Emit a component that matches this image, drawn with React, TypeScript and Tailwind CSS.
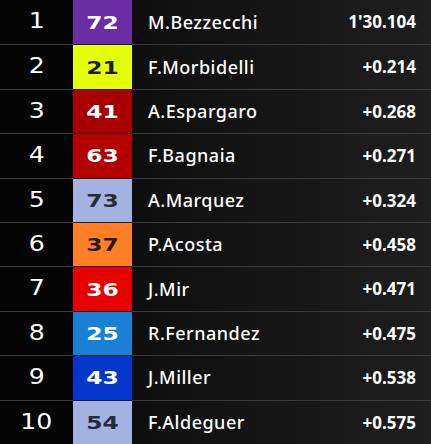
import React from "react";

type Rider = {
  pos: number;
  num: string;
  name: string;
  time: string;
  bg: string;
  fg: string;
};

const riders: Rider[] = [
  { pos: 1, num: "72", name: "M.Bezzecchi", time: "1'30.104", bg: "bg-[#6a2da3]", fg: "text-white" },
  { pos: 2, num: "21", name: "F.Morbidelli", time: "+0.214", bg: "bg-[#e3ff0a]", fg: "text-[#1e1e1e]" },
  { pos: 3, num: "41", name: "A.Espargaro", time: "+0.268", bg: "bg-[#a80000]", fg: "text-white" },
  { pos: 4, num: "63", name: "F.Bagnaia", time: "+0.271", bg: "bg-[#b30000]", fg: "text-white" },
  { pos: 5, num: "73", name: "A.Marquez", time: "+0.324", bg: "bg-[#a4b2e2]", fg: "text-[#262b3c]" },
  { pos: 6, num: "37", name: "P.Acosta", time: "+0.458", bg: "bg-[#ff7f27]", fg: "text-[#2a1a10]" },
  { pos: 7, num: "36", name: "J.Mir", time: "+0.471", bg: "bg-[#e60000]", fg: "text-white" },
  { pos: 8, num: "25", name: "R.Fernandez", time: "+0.475", bg: "bg-[#1a80d6]", fg: "text-white" },
  { pos: 9, num: "43", name: "J.Miller", time: "+0.538", bg: "bg-[#0536cc]", fg: "text-white" },
  { pos: 10, num: "54", name: "F.Aldeguer", time: "+0.575", bg: "bg-[#a4b2e2]", fg: "text-[#262b3c]" },
];

const RiderRow = ({ rider, first }: { rider: Rider; first: boolean }) => {
  return (
    <div className="flex flex-1 min-h-0">
      <div
        className={`w-[73px] flex items-center justify-center bg-[#050505] text-white text-[21px] font-normal ${
          first ? "" : "border-t border-[#3c3c3c]"
        }`}
        style={{ fontFamily: '"DejaVu Sans", sans-serif' }}
      >
        <span className="inline-block scale-x-[1.2]">{rider.pos}</span>
      </div>
      <div
        className={`w-[59px] flex items-center justify-center ${rider.bg} ${rider.fg} text-[18px] font-black ${
          first ? "" : "border-t border-[#1a1a1a]"
        }`}
        style={{ fontFamily: '"DejaVu Sans", sans-serif' }}
      >
        <span className="inline-block scale-x-[1.3]">{rider.num}</span>
      </div>
      <div
        className={`flex-1 flex items-center justify-between pl-4 pr-[15px] bg-gradient-to-r from-[#0e0e0e] to-[#1e1e1e] ${
          first ? "" : "border-t border-[#3c3c3c]"
        }`}
        style={{ fontFamily: '"Noto Sans", sans-serif' }}
      >
        <span className="text-white text-[18px] font-medium tracking-[0.5px]">{rider.name}</span>
        <span className="text-white text-[17px] font-bold">{rider.time}</span>
      </div>
    </div>
  );
};

const App = () => {
  return (
    <div className="w-[431px] h-[444px] flex flex-col bg-black overflow-hidden">
      {riders.map((r, i) => (
        <RiderRow key={r.pos} rider={r} first={i === 0} />
      ))}
    </div>
  );
};

export default App;
